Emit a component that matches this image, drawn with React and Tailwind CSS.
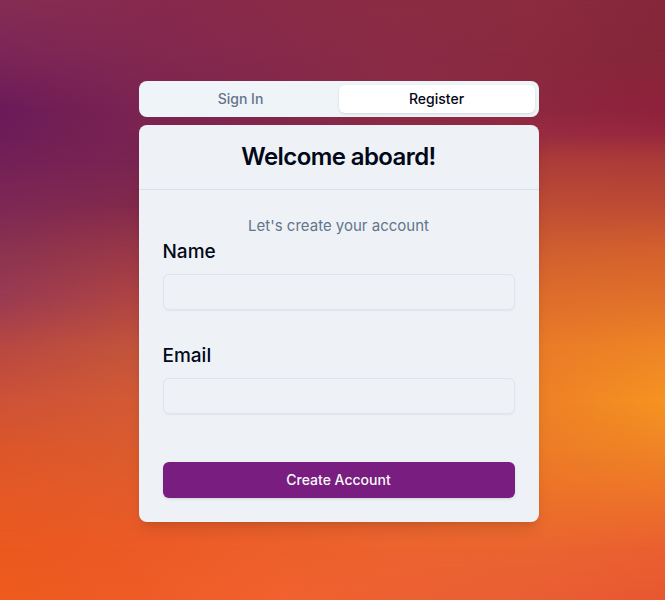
import { useState } from "react";

// Each band is a horizontal blend that fades in from the previous band's height.
const bands = [
  { at: 0, colors: "#862d54 0%, #87294c 25%, #8b2c42 60%, #8c2b3f 80%, #87273b 100%" },
  { at: 9, colors: "#7c2658 0%, #83284f 25%, #8a2b45 60%, #8a293e 80%, #862639 100%" },
  { at: 18, colors: "#6b1b5a 0%, #721f56 9%, #7a2352 20%, #8a2b45 60%, #8c273f 82%, #8f213c 100%" },
  { at: 22, colors: "#6d1c59 0%, #722055 9%, #7a2352 20%, #8c2b44 60%, #982a41 82%, #96263e 100%" },
  { at: 27, colors: "#732157 0%, #7a2452 20%, #982f42 60%, #ad3d39 82%, #ac3c38 100%" },
  { at: 34, colors: "#7d2755 0%, #82294c 20%, #aa4040 60%, #bd4c35 82%, #bd4a34 100%" },
  { at: 42, colors: "#8b3350 0%, #9a3847 20%, #bc4e3a 60%, #d15f2f 82%, #d5612d 100%" },
  { at: 50, colors: "#9a3b52 0%, #b04443 20%, #c85a34 60%, #df6e2b 82%, #e0712a 100%" },
  { at: 58, colors: "#b84842 0%, #c3543b 20%, #d56234 60%, #ea7c28 82%, #ee8525 100%" },
  { at: 67, colors: "#ce5238 0%, #d35a34 20%, #df6a2e 60%, #ee8126 82%, #f69321 100%" },
  { at: 75, colors: "#dc5629 0%, #db5b2e 20%, #e3672e 60%, #ed7c27 82%, #f08425 100%" },
  { at: 83, colors: "#e55825 0%, #e45c2a 20%, #e6642d 60%, #ec7129 82%, #ed7329 100%" },
  { at: 91, colors: "#eb591f 0%, #ec5a26 20%, #ec642f 60%, #ea6530 82%, #ea6030 100%" },
  { at: 100, colors: "#ee5b1c 0%, #ee5b25 20%, #f2612f 42%, #ea6034 70%, #e85731 100%" },
];

function Backdrop() {
  return (
    <div aria-hidden="true" className="absolute inset-0 -z-10">
      {bands.map((band, i) => (
        <div
          key={band.at}
          className="absolute inset-0"
          style={{
            backgroundImage: `linear-gradient(to right, ${band.colors})`,
            maskImage:
              i === 0
                ? undefined
                : `linear-gradient(to bottom, transparent ${bands[i - 1].at}%, black ${band.at}%)`,
          }}
        />
      ))}
    </div>
  );
}

function Tab({ active, onClick, children }) {
  return (
    <button
      type="button"
      role="tab"
      aria-selected={active}
      onClick={onClick}
      className={
        active
          ? "flex-1 rounded-md bg-white text-sm font-medium text-[#020817] shadow-sm"
          : "flex-1 rounded-md text-sm font-medium text-[#64748b]"
      }
    >
      {children}
    </button>
  );
}

function Field({ id, label, type }) {
  return (
    <div className="flex flex-col gap-2">
      <label htmlFor={id} className="text-[19px] leading-7 font-medium">
        {label}
      </label>
      <input
        id={id}
        type={type}
        className="h-9 w-full rounded-md border border-[#dfe4eb] bg-transparent px-3 text-sm shadow-xs outline-none"
      />
    </div>
  );
}

export default function App() {
  const [tab, setTab] = useState("register");
  return (
    <div className="relative isolate flex min-h-screen justify-center pt-[81px] pb-8 pl-3 font-['Inter',sans-serif] text-[#020817]">
      <Backdrop />
      <main className="flex w-full max-w-[400px] flex-col gap-2">
        <div role="tablist" className="flex h-9 rounded-lg bg-[#eff4f8] p-1">
          <Tab active={tab === "signin"} onClick={() => setTab("signin")}>
            Sign In
          </Tab>
          <Tab active={tab === "register"} onClick={() => setTab("register")}>
            Register
          </Tab>
        </div>
        <section className="rounded-lg bg-[#eef2f7] shadow-lg">
          <header className="border-b border-[#dce1e8] py-4">
            <h1 className="text-center text-2xl font-semibold tracking-tight">Welcome aboard!</h1>
          </header>
          <form className="p-6" onSubmit={(e) => e.preventDefault()}>
            <p className="text-center text-[15px] leading-6 text-[#64748b]">
              Let's create your account
            </p>
            <div className="flex flex-col gap-8">
              <Field id="name" label="Name" type="text" />
              <Field id="email" label="Email" type="email" />
            </div>
            <button
              type="submit"
              className="mt-12 h-9 w-full rounded-md bg-[#7a1d80] text-sm font-medium text-[#f8fafc] shadow-sm"
            >
              Create Account
            </button>
          </form>
        </section>
      </main>
    </div>
  );
}
